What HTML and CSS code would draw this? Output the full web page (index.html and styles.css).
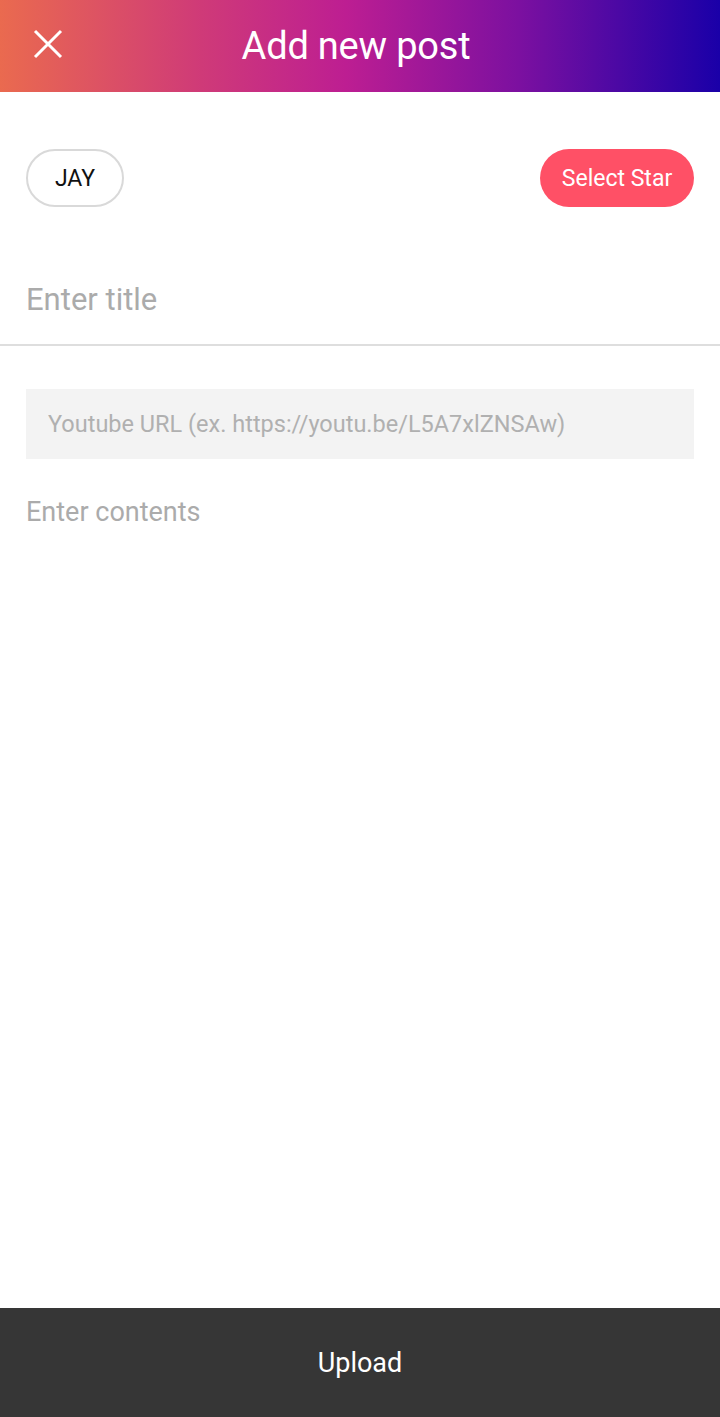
FILE: index.html
```html
<!DOCTYPE html>
<html lang="en">
  <head>
    <meta charset="UTF-8" />
    <meta name="viewport" content="width=device-width, initial-scale=1.0" />
    <title>Add new post</title>
    <link rel="stylesheet" href="styles.css">
  </head>
  <body>
    <div class="screen">
      <div class="header">
        <button class="close" aria-label="Close">
          <svg width="30" height="30" viewBox="0 0 30 30">
            <path d="M2 2 L28 28 M28 2 L2 28" stroke="#fff" stroke-width="3" fill="none" />
          </svg>
        </button>
        <h1>Add new post</h1>
      </div>

      <div class="pills">
        <button class="pill pill-outline">JAY</button>
        <button class="pill pill-red">Select Star</button>
      </div>

      <input type="text" class="title-input" placeholder="Enter title" />

      <div class="body">
        <input type="text" class="url-input" placeholder="Youtube URL (ex. https://youtu.be/L5A7xlZNSAw)" />
        <textarea class="contents" placeholder="Enter contents"></textarea>
      </div>

      <button class="upload">Upload</button>
    </div>
  </body>
</html>
```

FILE: styles.css
```css
body {
  margin: 0;
  font-family: Roboto, "Noto Sans", sans-serif;
  background-color: #fff;
}
.screen {
  display: flex;
  flex-direction: column;
  height: 1417px;
}
.header {
  position: relative;
  display: flex;
  justify-content: center;
  align-items: center;
  height: 92px;
  background: linear-gradient(90deg, #ea6a4f 0%, #cf3a78 28%, #bd1e92 48%, #7c10a0 72%, #1a00a8 100%);
}
.header h1 {
  margin: 0;
  color: #fff;
  font-weight: 400;
  font-size: 38px;
  letter-spacing: -0.2px;
  padding-right: 8px;
}
.close {
  position: absolute;
  left: 33px;
  top: 29px;
  padding: 0;
  border: none;
  background: none;
  width: 30px;
  height: 30px;
}
.pills {
  display: flex;
  justify-content: space-between;
  align-items: center;
  padding: 57px 26px 0 26px;
}
.pill {
  height: 58px;
  border-radius: 29px;
  font-family: inherit;
  font-size: 23px;
  padding: 0 20px;
}
.pill-outline {
  width: 98px;
  background: #fff;
  border: 2px solid #d9d9d9;
  color: #111;
}
.pill-red {
  width: 154px;
  background: #ff5066;
  border: none;
  color: #fff;
}
.title-input {
  box-sizing: border-box;
  margin-top: 59px;
  height: 80px;
  border: none;
  border-bottom: 2px solid #dedede;
  padding: 0 26px 12px 26px;
  font-family: inherit;
  font-size: 31px;
  outline: none;
}
.title-input::placeholder,
.contents::placeholder {
  color: #ababab;
}
.body {
  display: flex;
  flex-direction: column;
  flex: 1;
  padding: 43px 26px 0 26px;
}
.url-input {
  height: 70px;
  border: none;
  background: #f3f3f3;
  padding: 0 22px;
  font-family: inherit;
  font-size: 23.5px;
  outline: none;
}
.url-input::placeholder {
  color: #b0b0b0;
}
.contents {
  flex: 1;
  margin-top: 37px;
  border: none;
  padding: 0;
  resize: none;
  font-family: inherit;
  font-size: 27px;
  outline: none;
}
.upload {
  height: 109px;
  border: none;
  background: #363636;
  color: #fff;
  font-family: inherit;
  font-size: 27px;
}
```
